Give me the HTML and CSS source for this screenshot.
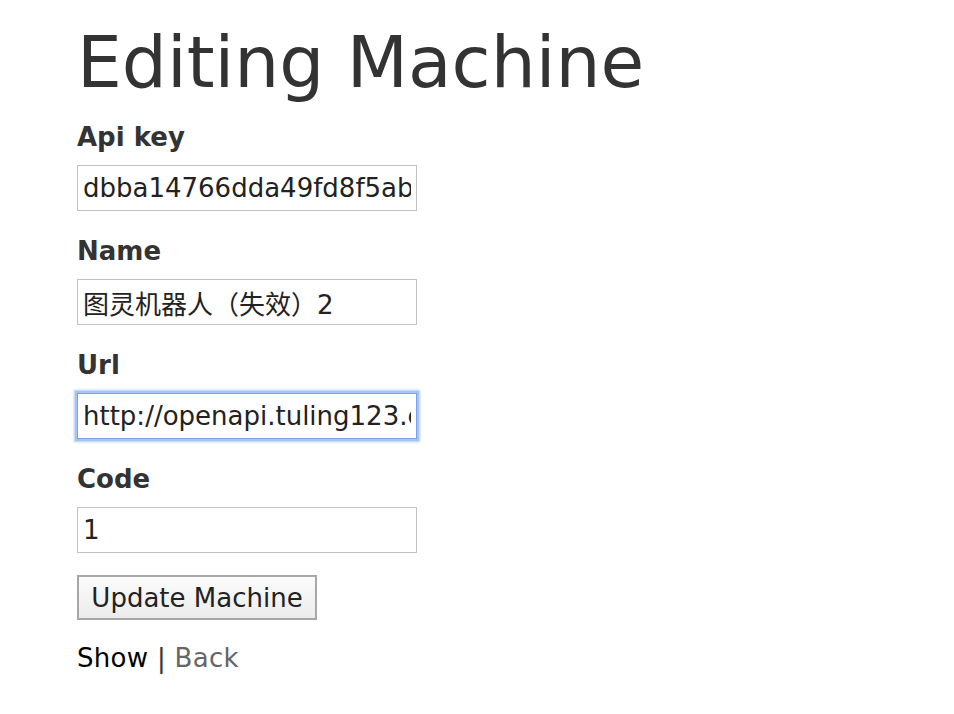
FILE: index.html
```html
<!DOCTYPE html>
<html lang="en">
<head>
<meta charset="utf-8">
<title>Editing Machine</title>
<link rel="stylesheet" href="styles.css">
</head>
<body>
<div class="page">
  <h1 class="title">Editing Machine</h1>
  <form class="machine-form">
    <div class="field">
      <label class="field-label" for="api_key">Api key</label>
      <input class="text-input" id="api_key" type="text" value="dbba14766dda49fd8f5ab6c1e2f3a4b5">
    </div>
    <div class="field">
      <label class="field-label" for="name">Name</label>
      <input class="text-input" id="name" type="text" value="图灵机器人（失效）2">
    </div>
    <div class="field">
      <label class="field-label" for="url">Url</label>
      <input class="text-input is-focused" id="url" type="text" value="http://openapi.tuling123.com/openapi/api">
    </div>
    <div class="field">
      <label class="field-label" for="code">Code</label>
      <input class="text-input" id="code" type="text" value="1">
    </div>
    <div class="actions">
      <button class="submit-btn" type="button">Update Machine</button>
    </div>
  </form>
  <div class="links"><a class="link" href="#show">Show</a> | <a class="link link-visited" href="#back">Back</a></div>
</div>
</body>
</html>
```
FILE: styles.css
```css
html, body {
  margin: 0;
  padding: 0;
  background: #fff;
}
body {
  color: #333;
  font-family: "DejaVu Sans", Verdana, "Noto Sans CJK SC", sans-serif;
  font-size: 26px;
  line-height: 36px;
}
.page {
  padding: 23px 0 0 77px;
}
.title {
  margin: 0;
  font-size: 71px;
  line-height: 80px;
  font-weight: normal;
  color: #333;
}
.machine-form {
  margin: 16px 0 0 0;
}
.field {
  margin-bottom: 22px;
}
.field-label {
  display: block;
  font-weight: bold;
  line-height: 36px;
  color: #333;
}
.text-input {
  display: block;
  box-sizing: border-box;
  width: 340px;
  height: 46px;
  margin: 10px 0 0 0;
  padding: 0 5px;
  border: 1px solid #c2c2c2;
  font-family: "DejaVu Sans", Verdana, "Noto Sans CJK SC", sans-serif;
  font-size: 26px;
  color: #222;
  background: #fff;
  outline: none;
}
.text-input.is-focused {
  border-color: #7aa2ea;
  box-shadow: 0 0 0 2px #a6c3f3, 0 0 2px 3px rgba(120, 160, 232, 0.55);
}
.actions {
  margin-top: 0;
}
.submit-btn {
  box-sizing: border-box;
  width: 240px;
  height: 45px;
  margin: 0;
  padding: 0;
  border: 2px solid #a7a7a7;
  border-radius: 0;
  background: linear-gradient(#fbfbfb, #ececec);
  font-family: "DejaVu Sans", Verdana, sans-serif;
  font-size: 26px;
  color: #222;
}
.links {
  margin-top: 20px;
  line-height: 36px;
  letter-spacing: 0.3px;
}
.link {
  color: #000;
  text-decoration: none;
}
.link-visited {
  color: #666;
}
```
